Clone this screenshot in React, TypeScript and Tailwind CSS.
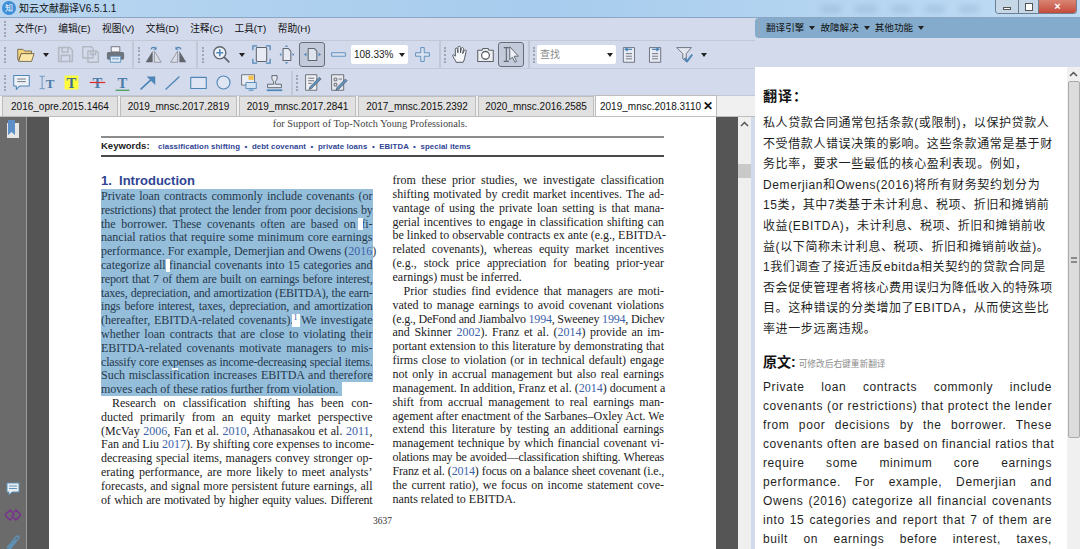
// App.tsx
import React from 'react';

const SANS = "font-['Liberation_Sans','Noto_Sans_CJK_SC',sans-serif]";
const BLUE = '#4f86b8';
const GREY = '#5f6670';

type Piece = string | { link: string } | { sup: string };
type Line = { parts: Piece[]; last?: boolean; indent?: boolean; hl?: boolean; tight?: boolean; notch?: [number, number, number, number] };

const col1: Line[] = [
  { hl: true, parts: ['Private loan contracts commonly include covenants (or'] },
  { hl: true, tight: true, parts: ['restrictions) that protect the lender from poor decisions by'] },
  { hl: true, parts: ['the borrower. These covenants often are based on fi-'], notch: [257, 1, 5, 13] },
  { hl: true, parts: ['nancial ratios that require some minimum core earnings'] },
  { hl: true, parts: ['performance. For example, Demerjian and Owens (', { link: '2016' }, ')'] },
  { hl: true, parts: ['categorize all financial covenants into 15 categories and'], notch: [65, 1, 4, 13] },
  { hl: true, tight: true, parts: ['report that 7 of them are built on earnings before interest,'] },
  { hl: true, tight: true, parts: ['taxes, depreciation, and amortization (EBITDA), the earn-'] },
  { hl: true, tight: true, parts: ['ings before interest, taxes, depreciation, and amortization'] },
  { hl: true, parts: ['(hereafter, EBITDA-related covenants).', { sup: '1' }, ' We investigate'], notch: [191, 1, 8, 13] },
  { hl: true, parts: ['whether loan contracts that are close to violating their'] },
  { hl: true, parts: ['EBITDA-related covenants motivate managers to mis-'] },
  { hl: true, tight: true, parts: ['classify core expenses as income-decreasing special items.'] },
  { hl: true, parts: ['Such misclassification increases EBITDA and therefore'], notch: [71, 0, 6, 2] },
  { hl: true, last: true, parts: ['moves each of these ratios further from violation.'] },
  { indent: true, parts: ['Research on classification shifting has been con-'] },
  { parts: ['ducted primarily from an equity market perspective'] },
  { parts: ['(McVay ', { link: '2006' }, ', Fan et al. ', { link: '2010' }, ', Athanasakou et al. ', { link: '2011' }, ','] },
  { parts: ['Fan and Liu ', { link: '2017' }, '). By shifting core expenses to income-'] },
  { parts: ['decreasing special items, managers convey stronger op-'] },
  { parts: ['erating performance, are more likely to meet analysts’'] },
  { parts: ['forecasts, and signal more persistent future earnings, all'] },
  { tight: true, parts: ['of which are motivated by higher equity values. Different'] },
];

const col2: Line[] = [
  { parts: ['from these prior studies, we investigate classification'] },
  { parts: ['shifting motivated by credit market incentives. The ad-'] },
  { parts: ['vantage of using the private loan setting is that mana-'] },
  { parts: ['gerial incentives to engage in classification shifting can'] },
  { parts: ['be linked to observable contracts ex ante (e.g., EBITDA-'] },
  { parts: ['related covenants), whereas equity market incentives'] },
  { parts: ['(e.g., stock price appreciation for beating prior-year'] },
  { last: true, parts: ['earnings) must be inferred.'] },
  { indent: true, parts: ['Prior studies find evidence that managers are moti-'] },
  { parts: ['vated to manage earnings to avoid covenant violations'] },
  { tight: true, parts: ['(e.g., DeFond and Jiambalvo ', { link: '1994' }, ', Sweeney ', { link: '1994' }, ', Dichev'] },
  { parts: ['and Skinner ', { link: '2002' }, '). Franz et al. (', { link: '2014' }, ') provide an im-'] },
  { parts: ['portant extension to this literature by demonstrating that'] },
  { parts: ['firms close to violation (or in technical default) engage'] },
  { parts: ['not only in accrual management but also real earnings'] },
  { parts: ['management. In addition, Franz et al. (', { link: '2014' }, ') document a'] },
  { parts: ['shift from accrual management to real earnings man-'] },
  { parts: ['agement after enactment of the Sarbanes–Oxley Act. We'] },
  { parts: ['extend this literature by testing an additional earnings'] },
  { parts: ['management technique by which financial covenant vi-'] },
  { tight: true, parts: ['olations may be avoided—classification shifting. Whereas'] },
  { tight: true, parts: ['Franz et al. (', { link: '2014' }, ') focus on a balance sheet covenant (i.e.,'] },
  { parts: ['the current ratio), we focus on income statement cove-'] },
  { last: true, parts: ['nants related to EBITDA.'] },
];

const translated = [
  '私人贷款合同通常包括条款(或限制)，以保护贷款人',
  '不受借款人错误决策的影响。这些条款通常是基于财',
  '务比率，要求一些最低的核心盈利表现。例如，',
  'Demerjian和Owens(2016)将所有财务契约划分为',
  '15类，其中7类基于未计利息、税项、折旧和摊销前',
  '收益(EBITDA)，未计利息、税项、折旧和摊销前收',
  '益(以下简称未计利息、税项、折旧和摊销前收益)。',
  '1我们调查了接近违反ebitda相关契约的贷款合同是',
  '否会促使管理者将核心费用误归为降低收入的特殊项',
  '目。这种错误的分类增加了EBITDA，从而使这些比',
  '率进一步远离违规。',
];

const original = [
  'Private loan contracts commonly include',
  'covenants (or restrictions) that protect the lender',
  'from poor decisions by the borrower. These',
  'covenants often are based on financial ratios that',
  'require some minimum core earnings',
  'performance. For example, Demerjian and',
  'Owens (2016) categorize all financial covenants',
  'into 15 categories and report that 7 of them are',
  'built on earnings before interest, taxes,',
];

const tabs = [
  { name: '2016_opre.2015.1464', w: 'w-[116px]' },
  { name: '2019_mnsc.2017.2819', w: 'w-[117px]' },
  { name: '2019_mnsc.2017.2841', w: 'w-[117px]' },
  { name: '2017_mnsc.2015.2392', w: 'w-[118px]' },
  { name: '2020_mnsc.2016.2585', w: 'w-[116px]' },
];

const menus = ['文件(F)', '编辑(E)', '视图(V)', '文档(D)', '注释(C)', '工具(T)', '帮助(H)'];

// small toolbar drawing, 22 units drawn at 19px
const Ico = ({ children }: { children: React.ReactNode }) => (
  <svg width="19" height="19" viewBox="0 0 22 22" fill="none" strokeLinejoin="round">
    {children}
  </svg>
);

const Btn = ({ w = 'w-[25px]', active, children }: { w?: string; active?: boolean; children: React.ReactNode }) => (
  <div
    className={`${w} h-[25px] shrink-0 flex items-center justify-center ${
      active ? 'bg-[#c3cad9] border border-[#666e7a] rounded-[3px]' : ''
    }`}
  >
    {children}
  </div>
);

const Caret = ({ w = 'w-[15px]' }: { w?: string }) => (
  <div className={`${w} shrink-0 flex items-center justify-center`}>
    <div className="w-0 h-0 border-x-[3.5px] border-x-transparent border-t-[4px] border-t-[#222]" />
  </div>
);

const Grip = ({ className = '' }: { className?: string }) => (
  <div className={`w-[2px] h-[16px] shrink-0 border-l-2 border-dotted border-[#9ea5b3] ${className}`} />
);

const Page = ({ x = 5 }: { x?: number }) => <rect x={x} y="3" width="12" height="16" rx="1" stroke={GREY} strokeWidth="1.2" fill="#e8ebf3" />;

const SaveIco = ({ color = '#b4b8c2' }: { color?: string }) => (
  <path d="M3 3h13l3 3v13H3z M7 3v5h7V3 M6 19v-7h10v7" stroke={color} strokeWidth="1.8" />
);

const Toolbar1 = () => (
  <div className="h-[29px] flex bg-[#d3daec] border-y border-[#c2c8d6]">
    <div className="w-[134px] shrink-0 flex items-center pl-[4px] border-r-2 border-[#c2c8d6] relative">
      <Grip />
      <div className="w-[6px]" />
      <Btn w="w-[26px]">
        <Ico>
          <path d="M2 5h6l2 2h8v3H6L3 18 2 17z" fill="#f3d27c" stroke="#6c6248" />
          <path d="M6 10h15l-3 9H3z" fill="#fbe6a8" stroke="#6c6248" />
        </Ico>
      </Btn>
      <Caret />
      <Btn><Ico><SaveIco /></Ico></Btn>
      <Btn>
        <Ico>
          <path d="M2 2h10l2 2v11H2z M8 7h10l2 2v11H8z M11 7v4h6V7" stroke="#b4b8c2" strokeWidth="1.6" />
        </Ico>
      </Btn>
      <Btn>
        <Ico>
          <path d="M6 2h10v6H6z" fill="#f4f5f8" stroke="#62666e" />
          <rect x="1" y="8" width="20" height="9" rx="2" fill="#6e737c" />
          <path d="M5 13h12v7H5z" fill="#dfe9f5" stroke="#5a8fbe" />
          <path d="M7 16h8" stroke="#5a8fbe" />
        </Ico>
      </Btn>
    </div>
    <div className="w-[64px] shrink-0 flex items-center pl-[4px] border-r-2 border-[#c2c8d6]">
      <Grip />
      <div className="w-[1px]" />
      <Btn>
        <Ico>
          <path d="M10 7v13H2z" fill="#62666c" />
          <path d="M12 7v13h8z" fill="#d9dce4" stroke="#8d929b" />
          <path d="M8 5c1-3 5-3 6 0" stroke={BLUE} strokeWidth="1.2" />
          <path d="M14 2v3h-3" stroke={BLUE} />
        </Ico>
      </Btn>
      <Btn>
        <Ico>
          <path d="M10 7v13H2z" fill="#d9dce4" stroke="#8d929b" />
          <path d="M12 7v13h8z" fill="#62666c" />
          <path d="M8 5c1-3 5-3 6 0" stroke={BLUE} strokeWidth="1.2" />
          <path d="M8 2v3h3" stroke={BLUE} />
        </Ico>
      </Btn>
    </div>
    <div className="w-[243px] shrink-0 flex items-center pl-[4px] border-r-2 border-[#c2c8d6]">
      <Grip />
      <div className="w-[5px]" />
      <Btn>
        <Ico>
          <circle cx="9" cy="9" r="7" fill="#eef1f7" stroke={GREY} strokeWidth="1.6" />
          <path d="M9 5v8M5 9h8" stroke={BLUE} strokeWidth="1.8" />
          <path d="M14 14l6 6" stroke={GREY} strokeWidth="2" />
        </Ico>
      </Btn>
      <Caret />
      <Btn>
        <Ico>
          <Page />
          <path d="M1 6V1h5M16 1h5v5M21 16v5h-5M6 21H1v-5" stroke={BLUE} strokeWidth="1.5" />
        </Ico>
      </Btn>
      <Btn>
        <Ico>
          <path d="M7 4h6l3 3v11H7z" stroke={GREY} strokeWidth="1.2" fill="#e8ebf3" />
          <path d="M11 0l2 2H9zM11 22l-2-2h4zM3 11l2-2v4zM20 11l-2-2v4z" fill={BLUE} />
        </Ico>
      </Btn>
      <Btn w="w-[26px]" active>
        <Ico>
          <path d="M6 4h7l3 3v11H6z" stroke={GREY} strokeWidth="1.2" fill="#dfe3ee" />
          <path d="M1 11l3-2v4zM21 11l-3-2v4z" fill={BLUE} />
        </Ico>
      </Btn>
      <Btn w="w-[26px]">
        <Ico><rect x="3" y="9" width="16" height="4" fill="#dce4f1" stroke={BLUE} /></Ico>
      </Btn>
      <div className={`w-[57px] h-[19px] shrink-0 bg-white rounded-[2px] flex items-center justify-between pl-[3px] pr-[3px] text-[10px] text-[#222] ${SANS}`}>
        108.33%
        <div className="w-0 h-0 border-x-[3.5px] border-x-transparent border-t-[4px] border-t-[#222]" />
      </div>
      <Btn w="w-[28px]">
        <Ico><path d="M9 3h4v6h6v4h-6v6H9v-6H3V9h6z" fill="#dce4f1" stroke={BLUE} /></Ico>
      </Btn>
    </div>
    <div className="w-[89px] shrink-0 flex items-center pl-[3px] border-r-2 border-[#c2c8d6]">
      <Grip />
      <div className="w-[2px]" />
      <Btn>
        <Ico>
          <path
            d="M6 20c-1-3-4-6-4-8 0-1 2-1 3 1V5c0-2 2-2 2.500 0L8 9V3c0-2 3-2 3 0v6l1-5c.5-2 3-1 2.500 1l-1 5 2-4c1-1 2.500 0 2 1.500L16 14c-.5 3-1 4-2 6z"
            fill="#f5f6f9"
            stroke="#4d5158"
            strokeWidth="1.1"
          />
        </Ico>
      </Btn>
      <Btn>
        <Ico>
          <path d="M2 6h5l1-2h6l1 2h5v13H2z" fill="#eceef4" stroke="#5d6168" strokeWidth="1.2" />
          <circle cx="11" cy="12" r="4.500" fill="#fff" stroke="#5d6168" strokeWidth="1.5" />
        </Ico>
      </Btn>
      <Btn w="w-[26px]" active>
        <Ico>
          <path d="M2 3h6M2 19h6M5 3v16" stroke={GREY} strokeWidth="1.3" />
          <path d="M9 2l10 11h-5l3 6-2 1-3-6-3 3z" fill="#eef1f7" stroke={GREY} strokeWidth="1.1" />
        </Ico>
      </Btn>
    </div>
    <div className="flex-1 flex items-center pl-[3px]">
      <Grip />
      <div className="w-[2px]" />
      <div className={`w-[79px] h-[19px] shrink-0 bg-white rounded-[2px] flex items-center justify-between px-[3px] text-[10px] text-[#8a8a8a] ${SANS}`}>
        查找
        <div className="w-0 h-0 border-x-[3.5px] border-x-transparent border-t-[4px] border-t-[#222]" />
      </div>
      <Btn w="w-[24px]">
        <Ico>
          <path d="M5 3h13v17H5z" fill="#e8ebf3" stroke={GREY} />
          <path d="M8 10h7M8 13h7M8 16h7" stroke={GREY} />
          <path d="M15 5H8M10 3L7 5l3 2" stroke={BLUE} strokeWidth="1.5" />
        </Ico>
      </Btn>
      <div className="w-[3px]" />
      <Btn w="w-[24px]">
        <Ico>
          <path d="M4 3h13v17H4z" fill="#e8ebf3" stroke={GREY} />
          <path d="M7 10h7M7 13h7M7 16h7" stroke={GREY} />
          <path d="M7 5h7M12 3l3 2-3 2" stroke={BLUE} strokeWidth="1.5" />
        </Ico>
      </Btn>
      <div className="w-[5px]" />
      <Btn w="w-[24px]">
        <Ico>
          <path d="M2 3h17l-6 7v9l-4-3v-6z" fill="#e4e7ef" stroke={GREY} />
          <path d="M11 15l3 4 6-8" stroke={BLUE} strokeWidth="2.200" />
        </Ico>
      </Btn>
      <Caret w="w-[16px]" />
    </div>
  </div>
);

const TGlyph = ({ extra, bg }: { extra?: React.ReactNode; bg?: string }) => (
  <Ico>
    {bg && <rect x="3" y="3" width="16" height="16" fill={bg} />}
    <text x="11" y="17" textAnchor="middle" fontFamily="Liberation Serif" fontWeight="700" fontSize="17" fill={bg ? '#3a6d93' : '#4a7ca8'}>
      T
    </text>
    {extra}
  </Ico>
);

const Toolbar2 = () => (
  <div className="h-[26px] flex items-center bg-[#d3daec] border-b border-[#c2c8d6] mt-[1px] pl-[4px]">
    <Grip />
    <div className="w-[2.500px]" />
    <Btn w="w-[25.300px]">
      <Ico>
        <path d="M2 3h18v12H9l-4 4v-4H2z" fill="#eef2f8" stroke={BLUE} strokeWidth="1.2" />
        <path d="M6 7h10M6 10h10" stroke={GREY} />
      </Ico>
    </Btn>
    <Btn w="w-[25.300px]">
      <Ico>
        <path d="M3 4h6M3 18h6M6 4v14" stroke="#7fa5c7" strokeWidth="1.5" />
        <text x="15" y="17" textAnchor="middle" fontFamily="Liberation Serif" fontWeight="700" fontSize="15" fill="#4a7ca8">T</text>
      </Ico>
    </Btn>
    <Btn w="w-[25.300px]"><TGlyph bg="#fdfd3c" /></Btn>
    <Btn w="w-[25.300px]"><TGlyph extra={<path d="M2 11h18" stroke="#e02b2b" strokeWidth="1.4" />} /></Btn>
    <Btn w="w-[25.300px]"><TGlyph extra={<path d="M3 20h16" stroke="#3f9a50" strokeWidth="1.4" />} /></Btn>
    <Btn w="w-[25.300px]">
      <Ico>
        <path d="M3 19L18 5" stroke={BLUE} strokeWidth="2" />
        <path d="M10 4h10v10z" fill={BLUE} />
      </Ico>
    </Btn>
    <Btn w="w-[25.300px]"><Ico><path d="M3 19L19 4" stroke={BLUE} strokeWidth="1.5" /></Ico></Btn>
    <Btn w="w-[25.300px]"><Ico><rect x="2" y="5" width="18" height="13" stroke={BLUE} strokeWidth="1.300" fill="#dfe5f2" /></Ico></Btn>
    <Btn w="w-[25.300px]"><Ico><circle cx="11" cy="11" r="7.500" stroke={BLUE} strokeWidth="1.300" fill="#dfe5f2" /></Ico></Btn>
    <Btn w="w-[25.300px]">
      <Ico>
        <path d="M3 2h15v12H3z" fill="#ebeef5" stroke={GREY} />
        <rect x="11" y="3" width="6" height="5" fill="#f6c04e" />
        <rect x="8" y="11" width="12" height="7" fill="#d5e4f3" stroke={BLUE} />
        <path d="M14 18v2M11 20h6" stroke={BLUE} />
      </Ico>
    </Btn>
    <Btn w="w-[25.300px]">
      <Ico>
        <path d="M8 3h6v4l-2 3v3h7v4H3v-4h7v-3L8 7z" fill="#e5e8f0" stroke={GREY} strokeWidth="1.1" />
        <path d="M2 20h18" stroke={BLUE} strokeWidth="2" />
      </Ico>
    </Btn>
    <div className="w-[4px]" />
    <div className="w-[2px] h-[24px] bg-[#c2c8d6]" />
    <div className="w-[3px]" />
    <Grip />
    <div className="w-[2px]" />
    <Btn w="w-[26px]">
      <Ico>
        <path d="M3 2h13v18H3z" fill="#eef0f5" stroke="#5d6168" />
        <path d="M6 6h7M6 9h7M6 12h4" stroke="#5d6168" />
        <path d="M8 16L19 5l2 2-11 11-3 1z" fill="#5f93c0" stroke="#4d5158" strokeWidth=".7" />
      </Ico>
    </Btn>
    <Btn w="w-[26px]">
      <Ico>
        <path d="M3 2h14v18H3z" fill="#e6e8ee" stroke="#5d6168" />
        <path d="M6 6h3v3H6zM11 7h4M6 12h3v3H6z" stroke="#5d6168" />
        <path d="M9 17L19 7l2 2-10 10-3 1z" fill="#5f93c0" stroke="#4d5158" strokeWidth=".7" />
      </Ico>
    </Btn>
  </div>
);

const Tab = ({ name, w }: { name: string; w: string }) => (
  <div className={`${w} h-[20px] shrink-0 mr-[2px] bg-[#e1e1e1] border border-[#bdbdbd] border-b-0 flex items-center justify-center text-[10px] text-[#111] ${SANS}`}>
    {name}
  </div>
);

const PdfLine = ({ line, h }: { line: Line; h: string }) => (
  <div
    className={`relative ${h} leading-[14px] whitespace-nowrap ${line.hl ? 'bg-[#95bedb] text-[#26394b]' : 'text-[#222]'} ${line.indent ? 'pl-[11px]' : ''} ${
      line.last ? (line.hl ? 'w-[241px]' : '') : '[text-align:justify] [text-align-last:justify]'
    } ${line.tight ? 'tracking-[-0.2px]' : ''}`}
  >
    {line.parts.map((p, i) =>
      typeof p === 'string' ? (
        <span key={i}>{p}</span>
      ) : 'link' in p ? (
        <span key={i} className="text-[#3c62a8]">{p.link}</span>
      ) : (
        <sup key={i} className="relative z-10 text-[8px] text-[#3c62a8]">{p.sup}</sup>
      )
    )}
    {line.notch && (
      <div
        className="absolute bg-white"
        style={{ left: line.notch[0], top: line.notch[1], width: line.notch[2], height: line.notch[3] }}
      />
    )}
  </div>
);

const PdfPage = () => (
  <div className="w-[667px] shrink-0 bg-white px-[52px] overflow-hidden font-['Liberation_Serif',serif] text-[12px]">
    <div className="h-[13px] leading-[13px] text-[10.300px] text-[#444] text-center pr-[25px]">for Support of Top-Notch Young Professionals.</div>
    <div className="mt-[6px] h-[21px] border-y-2 border-t-[#8c8c8c] border-b-[#4a4a4a] flex items-center font-['Liberation_Sans',sans-serif] font-bold">
      <span className="text-[#222] w-[57px] text-[9.500px]">Keywords:</span>
      <span className="text-[#2f4494] text-[7.800px] tracking-[0.1px] whitespace-pre">classification shifting  •  debt covenant  •  private loans  •  EBITDA  •  special items</span>
    </div>
    <div className="grid grid-cols-2 gap-[20px] pt-[16px]">
      <div>
        <div className="h-[16px] leading-[16px] font-['Liberation_Sans',sans-serif] font-bold text-[13px] text-[#2f4494] whitespace-pre">1.  Introduction</div>
        {col1.map((l, i) => (
          <PdfLine key={i} line={l} h="h-[13.800px]" />
        ))}
      </div>
      <div>
        {col2.map((l, i) => (
          <PdfLine key={i} line={l} h="h-[13.870px]" />
        ))}
      </div>
    </div>
    <div className="mt-[8px] text-center text-[9.500px] text-[#333]">3637</div>
  </div>
);

const RightPanel = () => (
  <div className="flex-1 min-w-0 flex flex-col">
    <div className="h-[20px] bg-[#84abcb] rounded-l-[4px] flex items-center pl-[3px]">
      <Grip className="border-[#5e7f9b]" />
      <div className={`flex items-center pl-[6px] text-[9.600px] text-[#111] ${SANS}`}>
        <span>翻译引擎</span>
        <Caret w="w-[16px]" />
        <span>故障解决</span>
        <Caret w="w-[16px]" />
        <span>其他功能</span>
        <Caret w="w-[16px]" />
      </div>
    </div>
    <div className="h-[29px] bg-[#d3daec]" />
    <div className="flex-1 min-h-0 flex">
      <div className={`flex-1 min-w-0 bg-white pl-[8px] pr-[15px] pt-[20px] overflow-hidden ${SANS} text-[12px] tracking-[0.6px] text-[#1f1f1f]`}>
        <div className="h-[18px] leading-[18px] text-[14px] font-bold tracking-[1px] text-[#111]">翻译：</div>
        <div className="mt-[8px]">
          {translated.map((t, i) => (
            <div key={i} className="h-[20.600px] leading-[20.600px] whitespace-nowrap">{t}</div>
          ))}
        </div>
        <div className="mt-[13px] h-[18px] flex items-end gap-[3px]">
          <span className="text-[14px] font-bold leading-[18px] tracking-normal text-[#111]">原文:</span>
          <span className="text-[8.700px] tracking-normal text-[#8c8c8c] leading-[14px]">可修改后右键重新翻译</span>
        </div>
        <div className="mt-[7px]">
          {original.map((t, i) => (
            <div key={i} className="h-[19px] leading-[19px] whitespace-nowrap [text-align:justify] [text-align-last:justify]">{t}</div>
          ))}
        </div>
      </div>
      <div className="w-[13px] shrink-0 bg-[#f0f0f0] flex flex-col items-center">
        <div className="h-[14px] text-[#555] flex items-center">
          <svg width="9" height="6" viewBox="0 0 9 6"><path d="M1 5l3.500-3.500L8 5" stroke="#555" strokeWidth="1.500" fill="none" /></svg>
        </div>
        <div className="w-[12px] h-[357px] bg-[#dcdcdc] border border-[#ababab] rounded-[2px] flex items-center justify-center">
          <div className="w-[6px] h-[6px] border-y-2 border-double border-[#8a8a8a]" />
        </div>
      </div>
    </div>
  </div>
);

export default function App() {
  return (
    <div className="w-[1080px] h-[549px] overflow-hidden flex flex-col bg-[#d3daec]">
      {/* title bar */}
      <div className="h-[18px] shrink-0 flex items-start bg-gradient-to-r from-[#b8d6f1] via-[#a7cced] to-[#c0dcf4] border-b border-[#8aa6c2]">
        <div className="w-[14px] h-[14px] mt-[1px] ml-[2px] rounded-full bg-[#3d8ed6] text-white text-[8px] leading-[14px] text-center font-['Noto_Sans_CJK_SC',sans-serif]">知</div>
        <div className={`ml-[3px] h-[17px] leading-[17px] text-[10px] text-[#111] ${SANS}`}>知云文献翻译V6.5.1.1</div>
        <div className="ml-auto mr-[16px] mt-[6px] flex gap-[14px]">
          <div className="w-[20px] h-[6px] bg-[#7f9fc0] opacity-40 blur-[3px]" />
          <div className="w-[22px] h-[6px] bg-[#7f9fc0] opacity-40 blur-[3px]" />
          <div className="w-[20px] h-[6px] bg-[#7f9fc0] opacity-40 blur-[3px]" />
          <div className="w-[20px] h-[6px] bg-[#7f9fc0] opacity-40 blur-[3px]" />
          <div className="w-[20px] h-[6px] bg-[#7f9fc0] opacity-40 blur-[3px]" />
        </div>
        <div className="mr-[3px] flex h-[14px] border border-t-0 border-[#6f7f92] rounded-b-[4px] overflow-hidden">
          <div className="w-[23px] bg-[#c6d8e8] border-r border-[#6f7f92] flex items-center justify-center">
            <div className="w-[8px] h-[3px] mt-[4px] bg-white border border-[#555]" />
          </div>
          <div className="w-[20px] bg-[#c6d8e8] border-r border-[#6f7f92] flex items-center justify-center">
            <div className="w-[8px] h-[8px] bg-white border border-[#555]" />
          </div>
          <div className="w-[37px] bg-gradient-to-b from-[#d98474] to-[#c44a3a] flex items-center justify-center text-white text-[11px] font-bold leading-none font-['Liberation_Sans',sans-serif]">×</div>
        </div>
      </div>

      <div className="flex-1 min-h-0 flex">
        {/* main column */}
        <div className="w-[755px] shrink-0 flex flex-col">
          <div className={`h-[22px] shrink-0 flex items-center bg-[#d3daec] pl-[4px] text-[9.700px] text-[#111] ${SANS}`}>
            <Grip />
            <div className="flex gap-[11.500px] ml-[9px]">
              {menus.map((m) => (
                <span key={m}>{m}</span>
              ))}
            </div>
          </div>
          <Toolbar1 />
          <Toolbar2 />
          <div className="h-[21px] shrink-0 flex items-end pl-[2px] bg-[#f0f0f0] border-b border-[#bdbdbd]">
            {tabs.map((t) => (
              <Tab key={t.name} name={t.name} w={t.w} />
            ))}
            <div className={`w-[122px] h-[21px] -ml-[1px] bg-white border border-[#bdbdbd] border-b-0 flex items-center justify-between pl-[4px] pr-[3px] text-[10px] text-[#111] ${SANS}`}>
              2019_mnsc.2018.3110
              <span className="font-bold text-[12px] leading-none">✕</span>
            </div>
          </div>
          <div className="flex-1 min-h-0 flex">
            <div className="w-[27px] shrink-0 overflow-hidden bg-[#6b6b6b] border-r border-[#9a9a9a] flex flex-col items-center justify-between pt-[3px]">
              <svg width="14" height="18" viewBox="0 0 14 18">
                <path d="M1 3h12v15H1z" fill="#e6e6e6" />
                <path d="M2 0h7v15l-3.500-3L2 15z" fill="#5e8fc8" />
              </svg>
              <div className="flex flex-col items-center gap-[13px] h-[67px] shrink-0">
                <svg className="shrink-0" width="14" height="14" viewBox="0 0 14 14">
                  <path d="M1 1h12v9H6l-3 3v-3H1z" fill="#e9eef3" stroke="#5e93b8" />
                  <path d="M3 4h8M3 6.500h8" stroke="#5e93b8" />
                </svg>
                <svg className="shrink-0 -mt-[1px]" width="18" height="14" viewBox="0 0 18 14" fill="none" stroke="#7a2e92" strokeWidth="1.500">
                  <path d="M1 7l5-5 4 4-2 2M17 7l-5 5-4-4 2-2M1 7l5 5 2-2M17 7l-5-5-2 2" />
                </svg>
                <svg className="shrink-0 -mt-[1px]" width="16" height="18" viewBox="0 0 16 18" fill="none" stroke="#5e93b8" strokeWidth="1.400">
                  <path d="M2 14L11 3c2-2 4 0 2 2L5 15c-1 1-2 0-1-1l7-8" />
                </svg>
              </div>
            </div>
            <div className="w-[22px] shrink-0 bg-[#555]" />
            <PdfPage />
            <div className="w-[22px] shrink-0 bg-[#555]" />
            <div className="w-[13px] shrink-0 bg-[#efefef] flex flex-col items-center">
              <svg className="mt-[4px]" width="9" height="6" viewBox="0 0 9 6"><path d="M1 5l3.500-3.500L8 5" stroke="#555" strokeWidth="1.500" fill="none" /></svg>
              <div className="w-full h-[14px] mt-[37px] bg-[#c9c9c9]" />
            </div>
            <div className="w-[4px] shrink-0 bg-[#d3daec]" />
          </div>
        </div>
        <RightPanel />
      </div>
    </div>
  );
}
